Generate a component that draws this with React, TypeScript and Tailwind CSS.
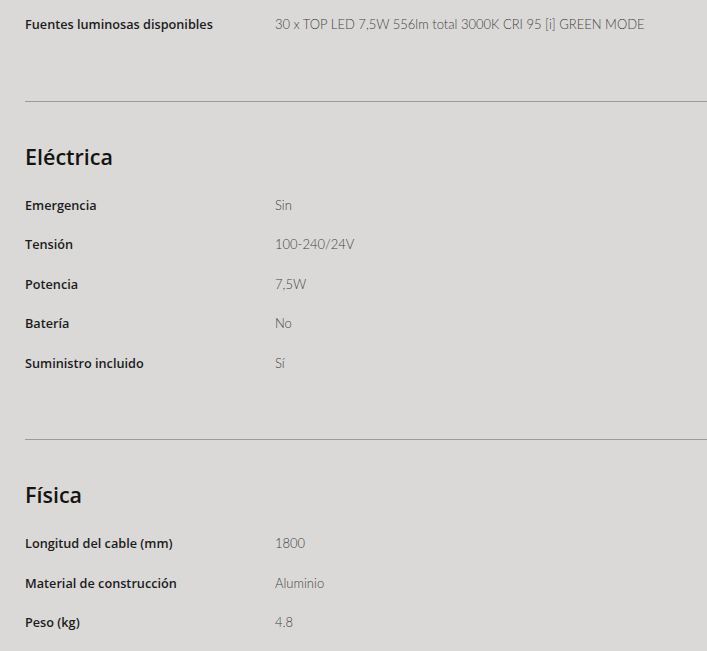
import React from "react";

type Row = [string, string];

const Rows = ({ rows }: { rows: Row[] }) => (
  <div className="flex flex-col">
    {rows.map(([k, v]) => (
      <div key={k} className="flex h-[39.5px] items-center">
        <div
          className="w-[250px] shrink-0 text-[12.7px] font-semibold text-[#1c1c1c]"
          style={{ fontFamily: "'Open Sans', sans-serif" }}
        >
          {k}
        </div>
        <div className="text-[13px] font-light text-[#444444]">{v}</div>
      </div>
    ))}
  </div>
);

const Section = ({ title, rows }: { title: string; rows: Row[] }) => (
  <div className="flex flex-col">
    <div className="h-px bg-[#9c9b99]" />
    <div
      className="mt-[41px] h-[28px] text-[21.5px] leading-[28px] font-semibold text-[#141414]"
      style={{ fontFamily: "'Open Sans', sans-serif" }}
    >
      {title}
    </div>
    <div className="mt-[15px]">
      <Rows rows={rows} />
    </div>
  </div>
);

export default function App() {
  return (
    <div
      className="min-h-[651px] w-full bg-[#dad9d7] pl-[25px] pt-[5px]"
      style={{ fontFamily: "Lato, 'Noto Sans', sans-serif" }}
    >
      <Rows rows={[["Fuentes luminosas disponibles", "30 x TOP LED 7,5W 556lm total 3000K CRI 95 [i] GREEN MODE"]]} />
      <div className="mt-[56px]">
        <Section
          title="Eléctrica"
          rows={[
            ["Emergencia", "Sin"],
            ["Tensión", "100-240/24V"],
            ["Potencia", "7,5W"],
            ["Batería", "No"],
            ["Suministro incluido", "Sí"],
          ]}
        />
      </div>
      <div className="mt-[56px]">
        <Section
          title="Física"
          rows={[
            ["Longitud del cable (mm)", "1800"],
            ["Material de construcción", "Aluminio"],
            ["Peso (kg)", "4.8"],
          ]}
        />
      </div>
    </div>
  );
}
